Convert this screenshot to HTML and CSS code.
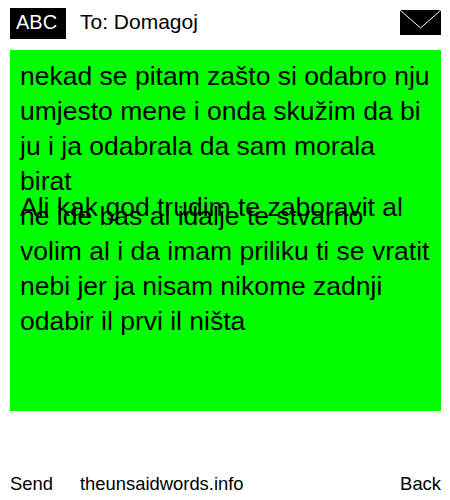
FILE: index.html
```html
<!DOCTYPE html>
<html lang="hr">
<head>
<meta charset="UTF-8">
<title>The Unsaid Words</title>
<link rel="stylesheet" href="styles.css">
</head>
<body>
  <div class="header">
    <div class="abc">ABC</div>
    <div class="to">To: Domagoj</div>
    <svg class="envelope" width="41" height="25" viewBox="0 0 41 25">
      <rect width="41" height="25" fill="#000"/>
      <polyline points="0,0 20.5,18 41,0" fill="none" stroke="#fff" stroke-width="1"/>
    </svg>
  </div>

  <div class="message">
    <p>nekad se pitam zašto si odabro nju umjesto mene i onda skužim da bi ju i ja odabrala da sam morala birat<br>ne ide bas al idalje te stvarno volim al i da imam priliku ti se vratit nebi jer ja nisam nikome zadnji odabir il prvi il ništa</p>
    <p class="over">Ali kak god trudim te zaboravit al</p>
  </div>

  <div class="footer">
    <span class="send">Send</span>
    <span class="site">theunsaidwords.info</span>
    <span class="back">Back</span>
  </div>
</body>
</html>
```

FILE: styles.css
```css
body {
  font-family: "Liberation Sans", Arial, sans-serif;
  margin: 0;
  padding: 8px 9px 0 10px;
  width: 431px;
  height: 492px;
  display: flex;
  flex-direction: column;
  background-color: #fff;
  color: #000;
}

.header {
  display: flex;
  align-items: center;
  height: 31px;
}

.abc {
  background-color: #000;
  color: #fff;
  font-size: 20px;
  width: 50px;
  height: 31px;
  line-height: 29px;
  padding-left: 6px;
}

.to {
  font-size: 21px;
  margin-left: 14px;
  padding-bottom: 3px;
  flex: 1;
}

.envelope {
  display: block;
  margin-bottom: 2px;
}

.message {
  position: relative;
  background-color: #00ff00;
  margin-top: 11px;
  height: 361px;
  padding: 8.5px 10px 10px;
  box-sizing: border-box;
  font-size: 26.5px;
  line-height: 35px;
}

.message p {
  margin: 0;
}

.message .over {
  position: absolute;
  top: 139.5px;
  left: 10px;
}

.footer {
  display: flex;
  font-size: 18.4px;
  margin-top: 62px;
}

.send {
  width: 70px;
}

.site {
  flex: 1;
}
```
